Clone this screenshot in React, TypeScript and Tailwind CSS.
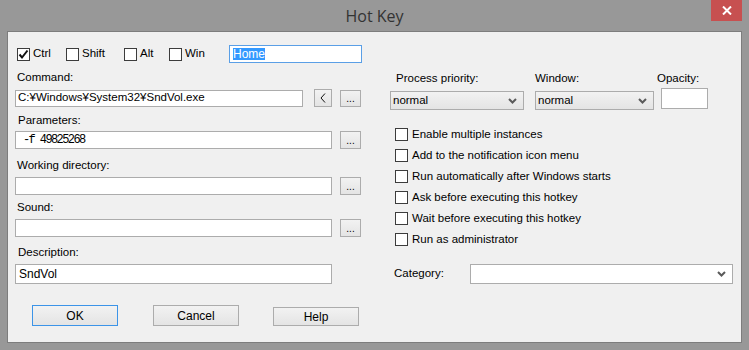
import React from "react";

const font = { fontFamily: '"Liberation Sans", Arial, sans-serif' };

function Box({ checked = false }: { checked?: boolean }) {
  return (
    <div className="w-[13px] h-[13px] border border-[#3c3c3c] bg-white shrink-0 relative">
      {checked && (
        <svg width="11" height="11" viewBox="0 0 11 11" className="absolute left-0 top-0">
          <path d="M1.5 5.5 L4 8.5 L9.5 1.5" stroke="#111" strokeWidth="2" fill="none" />
        </svg>
      )}
    </div>
  );
}

function Chevron() {
  return (
    <svg width="9" height="6" viewBox="0 0 9 6">
      <path d="M1 1 L4.5 4.5 L8 1" stroke="#5a5a5a" strokeWidth="2" fill="none" />
    </svg>
  );
}

function Btn({ label, w, h, cls = "" }: { label: React.ReactNode; w: string; h: string; cls?: string }) {
  return (
    <div
      className={`${w} ${h} ${cls} shrink-0 border border-[#acacac] bg-gradient-to-b from-[#f2f2f2] to-[#e4e4e4] flex items-center justify-center text-[12px] text-black`}
    >
      {label}
    </div>
  );
}

export default function App() {
  return (
    <div className="w-[749px] h-[350px] bg-[#989898] flex flex-col text-[11.5px] text-black" style={font}>
      <div className="relative h-[31px] flex items-center justify-center shrink-0">
        <span className="text-[16px] text-[#333] mt-[1px]" style={{ fontFamily: '"Open Sans", sans-serif' }}>
          Hot Key
        </span>
        <div className="absolute right-[7px] top-0 w-[31px] h-[21px] bg-[#c75050] flex items-center justify-center">
          <svg width="10" height="9" viewBox="0 0 10 9">
            <path d="M1 0.5 L9 8.5 M9 0.5 L1 8.5" stroke="#fff" strokeWidth="2" />
          </svg>
        </div>
      </div>
      <div className="ml-[7px] w-[735px] h-[312px] border border-[#7d7d7d] bg-[#f0f0f0] flex">
        {/* left column */}
        <div className="ml-[7px] w-[347px] flex flex-col">
          <div className="mt-[13px] h-[18px] flex items-center">
            <div className="ml-[2px] w-[49px] flex items-center gap-[3px]">
              <Box checked />
              <span>Ctrl</span>
            </div>
            <div className="w-[58px] flex items-center gap-[3px]">
              <Box />
              <span>Shift</span>
            </div>
            <div className="w-[45px] flex items-center gap-[3px]">
              <Box />
              <span>Alt</span>
            </div>
            <div className="w-[60px] flex items-center gap-[3px]">
              <Box />
              <span>Win</span>
            </div>
            <div className="w-[133px] h-[18px] border border-[#5a9fe6] bg-white flex items-center px-[3px] shrink-0">
              <span className="bg-[#3399ff] text-white leading-[12px] h-[12px] text-[12px]">Home</span>
            </div>
          </div>
          <div className="mt-[7px] h-[14px] leading-[14px] ml-[2px]">Command:</div>
          <div className="mt-[5px] h-[18px] flex items-center">
            <div className="w-[288px] h-[17px] border border-[#acacac] bg-white flex items-center px-[2px]">
              C:¥Windows¥System32¥SndVol.exe
            </div>
            <Btn
              w="w-[18px]"
              h="h-[18px]"
              cls="ml-[11px]"
              label={
                <svg width="6" height="10" viewBox="0 0 6 10">
                  <path d="M5 0.5 L1 5 L5 9.5" stroke="#111" strokeWidth="1" fill="none" />
                </svg>
              }
            />
            <Btn w="w-[21px]" h="h-[17px]" cls="ml-[8px]" label={<span className="text-[10px] leading-[10px] mt-[1px]">...</span>} />
          </div>
          <div className="mt-[6px] h-[14px] leading-[14px] ml-[3px]">Parameters:</div>
          <div className="mt-[4px] h-[18px] flex items-center">
            <div
              className="w-[317px] h-[18px] border border-[#acacac] bg-white flex items-center pl-[7px] text-[12px] tracking-[-1.6px]"
              style={{ fontFamily: '"Liberation Mono", monospace' }}
            >
              -f 49825268
            </div>
            <Btn w="w-[21px]" h="h-[18px]" cls="ml-[8px]" label={<span className="text-[10px] leading-[10px] mt-[1px]">...</span>} />
          </div>
          <div className="mt-[9px] h-[14px] leading-[14px] ml-[2px]">Working directory:</div>
          <div className="mt-[5px] h-[18px] flex items-center">
            <div className="w-[317px] h-[18px] border border-[#acacac] bg-white" />
            <Btn w="w-[21px]" h="h-[18px]" cls="ml-[8px]" label={<span className="text-[10px] leading-[10px] mt-[1px]">...</span>} />
          </div>
          <div className="mt-[5px] h-[14px] leading-[14px] ml-[2px]">Sound:</div>
          <div className="mt-[5px] h-[18px] flex items-center">
            <div className="w-[317px] h-[18px] border border-[#acacac] bg-white" />
            <Btn w="w-[21px]" h="h-[18px]" cls="ml-[8px]" label={<span className="text-[10px] leading-[10px] mt-[1px]">...</span>} />
          </div>
          <div className="mt-[8px] h-[14px] leading-[14px] ml-[3px]">Description:</div>
          <div className="mt-[5px] w-[317px] h-[20px] border border-[#acacac] bg-white flex items-center px-[3px] text-[12px]">
            SndVol
          </div>
          <div className="mt-[21px] flex items-start text-[12px]">
            <div className="ml-[17px] w-[86px] h-[21px] border border-[#3c94e8] bg-gradient-to-b from-[#f2f2f2] to-[#e4e4e4] flex items-center justify-center">
              OK
            </div>
            <Btn w="w-[86px]" h="h-[21px]" cls="ml-[35px]" label="Cancel" />
            <Btn w="w-[86px]" h="h-[19px]" cls="ml-[34px] mt-[2px]" label="Help" />
          </div>
        </div>
        {/* right column */}
        <div className="ml-[28px] w-[343px] flex flex-col">
          <div className="mt-[39px] h-[14px] leading-[14px] flex">
            <span className="ml-[6px] w-[139px]">Process priority:</span>
            <span className="w-[122px]">Window:</span>
            <span>Opacity:</span>
          </div>
          <div className="mt-[3px] h-[22px] flex items-start">
            <div className="mt-[3px] w-[134px] h-[19px] border border-[#acacac] bg-gradient-to-b from-[#f2f2f2] to-[#e4e4e4] flex items-center justify-between pl-[2px] pr-[6px]">
              <span>normal</span>
              <Chevron />
            </div>
            <div className="ml-[11px] mt-[3px] w-[119px] h-[19px] border border-[#acacac] bg-gradient-to-b from-[#f2f2f2] to-[#e4e4e4] flex items-center justify-between pl-[2px] pr-[6px]">
              <span>normal</span>
              <Chevron />
            </div>
            <div className="ml-[7px] w-[47px] h-[21px] border border-[#acacac] bg-white" />
          </div>
          <div className="mt-[14px] flex flex-col">
            {[
              "Enable multiple instances",
              "Add to the notification icon menu",
              "Run automatically after Windows starts",
              "Ask before executing this hotkey",
              "Wait before executing this hotkey",
              "Run as administrator",
            ].map((t) => (
              <div key={t} className="h-[21px] flex items-center ml-[5px] gap-[4px]">
                <Box />
                <span>{t}</span>
              </div>
            ))}
          </div>
          <div className="mt-[14px] h-[20px] flex items-center">
            <span className="ml-[4px] w-[76px]">Category:</span>
            <div className="w-[263px] h-[20px] border border-[#acacac] bg-white flex items-center justify-end pr-[6px]">
              <Chevron />
            </div>
          </div>
        </div>
      </div>
    </div>
  );
}
